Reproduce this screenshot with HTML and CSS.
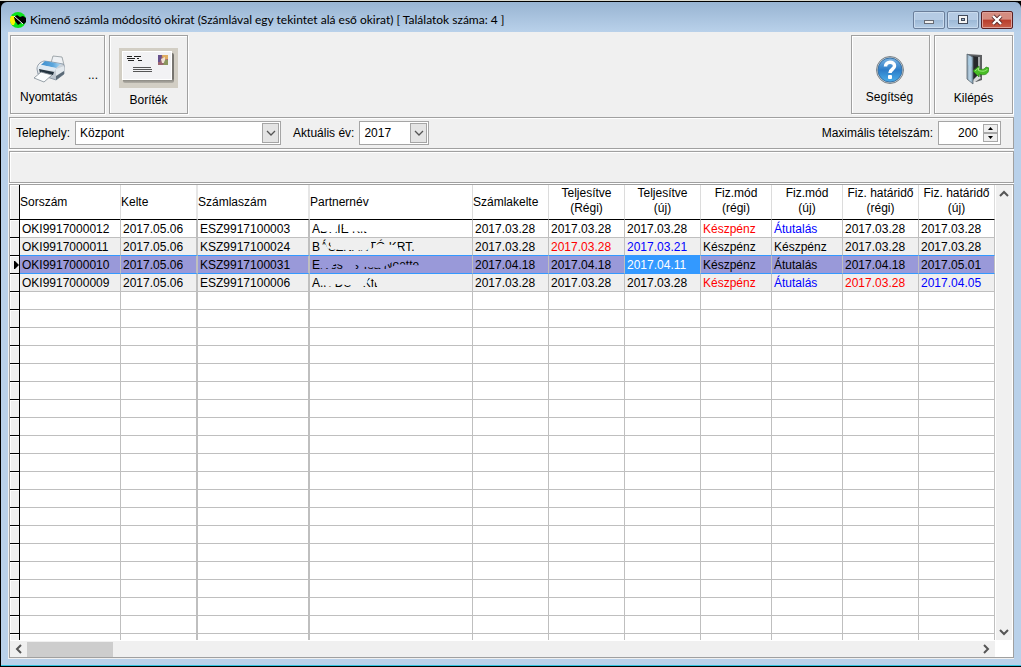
FILE: index.html
```html
<!DOCTYPE html>
<html lang="hu">
<head>
<meta charset="utf-8">
<title>Kimenő számla módosító okirat</title>
<link rel="stylesheet" href="styles.css">
</head>
<body>
<div class="window">
  <header class="titlebar">
    <svg class="app-icon" width="16" height="16" viewBox="0 0 16 16">
      <circle cx="8" cy="8" r="8" fill="#0be31b"/>
      <path d="M1 4L4 4L6 8L4 13L2 13A8 8 0 0 1 1 4Z" fill="#f8f800"/>
      <path d="M4 5L7 3L10 5L13 4L16 6V10L14 12L11 11L8 13L5 9Z" fill="#000"/>
      <path d="M4 4L13 12" stroke="#fff" stroke-width="1"/>
    </svg>
    <h1 class="title">Kimenő számla módosító okirat (Számlával egy tekintet alá eső okirat) [ Találatok száma: 4 ]</h1>
    <div class="window-buttons">
      <button class="wbtn" aria-label="Kis méret"><svg width="12" height="12" viewBox="0 0 12 12"><rect x="1.5" y="6.5" width="9" height="3" fill="#eee" stroke="#666b75"/></svg></button>
      <button class="wbtn" aria-label="Teljes méret"><svg width="12" height="12" viewBox="0 0 12 12"><rect x="1.5" y="1.5" width="9" height="8" fill="#f4f4f4" stroke="#414a5a"/><rect x="4.5" y="4.5" width="3" height="2" fill="#9db4d0" stroke="#414a5a"/></svg></button>
      <button class="wbtn close" aria-label="Bezárás"><svg width="12" height="12" viewBox="0 0 12 12"><path d="M2 2L10 10M10 2L2 10" stroke="#5a2a2a" stroke-width="4"/><path d="M2 2L10 10M10 2L2 10" stroke="#fff" stroke-width="2.4"/></svg></button>
    </div>
  </header>
  <main class="content">
    <nav class="toolbar">
      <button class="tool print">
        <span class="print-row">
        <svg width="32" height="28" viewBox="0 0 32 28">
          <defs>
            <linearGradient id="lid" x1="0" y1="0" x2="1" y2="0"><stop offset="0" stop-color="#3f8fce"/><stop offset=".6" stop-color="#5ba6dc"/><stop offset="1" stop-color="#b5dcf4"/></linearGradient>
            <linearGradient id="side" x1="0" y1="0" x2="1" y2="1"><stop offset="0" stop-color="#fff"/><stop offset="1" stop-color="#a3afbb"/></linearGradient>
          </defs>
          <path d="M18 8L20 1L29 2L31 10L26 13Z" fill="#eef1f4" stroke="#8d959b" stroke-width=".8"/>
          <path d="M4 14C4 10 7 7 11 6L19 7L30 9Q32 10 31 13V19L23 25L5 19Z" fill="url(#side)" stroke="#7c8c9a" stroke-width=".8"/>
          <path d="M8 10L12 6L28 9L23 13Z" fill="url(#lid)"/>
          <path d="M5 12L9 10L23 13L22 16L5 14Z" fill="#dfeaf3"/>
          <path d="M6 14L21 17L20 20L7 18Z" fill="#24333f"/>
          <path d="M23 14L31 11V18L23 24Z" fill="#e3e9ee"/>
          <path d="M23 21L31 16V19L23 25Z" fill="#5b6a77"/>
          <path d="M8 17L19 20L11 27L1 23Z" fill="#fafcfd" stroke="#7f8a93" stroke-width=".8"/>
        </svg><span class="more">...</span></span>
        <span class="print-label">Nyomtatás</span>
      </button>
      <button class="tool cover">
        <svg width="59" height="40" viewBox="0 0 59 40">
          <defs><linearGradient id="shade" x1="0" y1="0" x2="0" y2="1"><stop offset=".85" stop-color="#777570"/><stop offset="1" stop-color="#b3b0a8"/></linearGradient></defs>
          <rect width="59" height="40" fill="#d2cec4"/>
          <rect x="4" y="5" width="51" height="30" rx="2" fill="url(#shade)"/>
          <rect x="3.5" y="3.5" width="49" height="28" fill="#f2f2f4" stroke="#fff"/>
          <path d="M8 8.5H13M15 8.5H22M8 10.5H16M18 10.5H20M9 12.5H15M19 12.5H23" stroke="#222"/>
          <path d="M14 19.5H32M14 21.5H33M14 23.5H33" stroke="#555"/>
          <rect x="39" y="7" width="10" height="10" fill="#9b6570"/><path d="M39 7H43L41 14H39Z" fill="#66508d"/><path d="M43 7H49V11L44 12Z" fill="#e0ad62"/><path d="M42 11L46 9L46 15H43Z" fill="#f0e2d5"/><path d="M46 12H49V17H44Z" fill="#8a965e"/>
        </svg>
        <span>Boríték</span>
      </button>
      <span class="spacer"></span>
      <button class="tool help">
        <svg width="30" height="30" viewBox="0 0 30 30">
          <defs><linearGradient id="ball" x1="0" y1="0" x2="0" y2="1"><stop offset="0" stop-color="#7db4e2"/><stop offset=".5" stop-color="#2c7cc8"/><stop offset="1" stop-color="#4aaeea"/></linearGradient></defs>
          <circle cx="15" cy="15" r="13.5" fill="#c5cace" stroke="#7d858b"/>
          <circle cx="15" cy="15" r="12" fill="url(#ball)" stroke="#3a74a8"/>
          <path d="M10.5 11.5C10.5 6 19.5 6 19.5 11C19.5 14.5 15 14 15 18" fill="none" stroke="#fff" stroke-width="3.5"/>
          <rect x="13" y="20" width="4" height="4" rx="1" fill="#fff"/>
        </svg>
        <span>Segítség</span>
      </button>
      <button class="tool exit">
        <svg width="30" height="32" viewBox="0 0 30 32">
          <defs><linearGradient id="door" x1="0" y1="0" x2="1" y2="0"><stop offset="0" stop-color="#8aa0b2"/><stop offset=".5" stop-color="#bcd6e8"/><stop offset="1" stop-color="#7995aa"/></linearGradient></defs>
          <path d="M8 1L23 2V27L17 29L14 27Z" fill="#5d5f61"/>
          <path d="M12 3L21 4V23L14 27Z" fill="#26292b"/>
          <path d="M19 4L21 4V25L19 24Z" fill="#a8acae"/>
          <path d="M14 27L19 22L22 25L16 29Z" fill="#d8dadb"/>
          <path d="M8 1L14 4V31L8 26Z" fill="url(#door)" stroke="#59646d" stroke-width=".8"/>
          <path d="M9.5 5L12.5 7V14L9.5 12Z" fill="#a9cde4"/>
          <path d="M14 18L20 13V16C24 17 26 16 27 14L30 15C30 21 26 23 20 21V24Z" fill="#48bd25" stroke="#2d8617" stroke-width=".7"/>
          <path d="M16 18L19.5 15V17.5C24 19 27 18 28.5 16" stroke="#9ae879" fill="none"/>
        </svg>
        <span>Kilépés</span>
      </button>
    </nav>
    <section class="panel filters">
      <label for="site">Telephely:</label>
      <span class="combo combo-site"><select id="site"><option>Központ</option></select><span class="arrow"><svg width="10" height="6" viewBox="0 0 10 6"><path d="M1 1L5 5L9 1" fill="none" stroke="#555" stroke-width="1.3"/></svg></span></span>
      <label class="year-label" for="year">Aktuális év:</label>
      <span class="combo combo-year"><select id="year"><option>2017</option></select><span class="arrow"><svg width="10" height="6" viewBox="0 0 10 6"><path d="M1 1L5 5L9 1" fill="none" stroke="#555" stroke-width="1.3"/></svg></span></span>
      <span class="spacer"></span>
      <label for="max">Maximális tételszám:</label>
      <span class="spin"><input id="max" type="text" value="200"><span class="spin-buttons">
        <button aria-label="Növelés"><svg width="5" height="3" viewBox="0 0 5 3"><path d="M0 3L2.5 0L5 3Z"/></svg></button>
        <button aria-label="Csökkentés"><svg width="5" height="3" viewBox="0 0 5 3"><path d="M0 0L2.5 3L5 0Z"/></svg></button></span></span>
    </section>
    <section class="panel info"></section>
    <section class="grid-panel">
      <div class="table-wrap">
        <table class="grid">
          <colgroup><col class="c-ind"><col class="c-num"><col class="c-date"><col class="c-inv"><col><col class="c-std"><col class="c-std"><col class="c-std"><col class="c-mode"><col class="c-mode"><col class="c-std"><col class="c-std"></colgroup>
          <thead><tr><td class="ind"></td><th>Sorszám</th><th class="wide">Kelte</th><th class="wide">Számlaszám</th><th>Partnernév</th><th>Számlakelte</th><th class="mid">Teljesítve<br>(Régi)</th><th class="mid">Teljesítve<br>(új)</th><th class="mid">Fiz.mód<br>(régi)</th><th class="mid">Fiz.mód<br>(új)</th><th class="mid">Fiz. határidő<br>(régi)</th><th class="mid">Fiz. határidő<br>(új)</th></tr></thead>
          <tbody id="rows">
            <tr><td class="ind"></td><td>OKI9917000012</td><td class="wide">2017.05.06</td><td class="wide">ESZ9917100003</td><td>A<span class="worn worn-a">DRIE Kft</span></td><td>2017.03.28</td><td>2017.03.28</td><td>2017.03.28</td><td class="old">Készpénz</td><td class="new">Átutalás</td><td>2017.03.28</td><td>2017.03.28</td></tr>
            <tr class="alt before"><td class="ind"></td><td>OKI9917000011</td><td class="wide">2017.05.06</td><td class="wide">KSZ9917100024</td><td>B<span class="worn worn-b">ÁSZNANTÓ KRT.</span></td><td>2017.03.28</td><td class="old">2017.03.28</td><td class="new">2017.03.21</td><td>Készpénz</td><td>Készpénz</td><td>2017.03.28</td><td>2017.03.28</td></tr>
            <tr class="selected"><td class="ind"><svg width="5" height="8" viewBox="0 0 5 8"><path d="M0 0H1L5 4L1 8H0Z"/></svg></td><td>OKI9917000010</td><td class="wide">2017.05.06</td><td class="wide">KSZ9917100031</td><td>E<span class="worn worn-c">rvés és Tsa Noette</span></td><td>2017.04.18</td><td>2017.04.18</td><td class="focus">2017.04.11</td><td>Készpénz</td><td>Átutalás</td><td>2017.04.18</td><td>2017.05.01</td></tr>
            <tr class="alt"><td class="ind"></td><td>OKI9917000009</td><td class="wide">2017.05.06</td><td class="wide">ESZ9917100006</td><td>A<span class="worn worn-d">.K DU - Kft</span></td><td>2017.03.28</td><td>2017.03.28</td><td>2017.03.28</td><td class="old">Készpénz</td><td class="new">Átutalás</td><td class="old">2017.03.28</td><td class="new">2017.04.05</td></tr>
          </tbody>
        </table>
      </div>
      <div class="vscroll">
        <svg width="10" height="7" viewBox="0 0 10 7"><path d="M1 6L5 2L9 6" fill="none" stroke="#555" stroke-width="2"/></svg>
        <svg width="10" height="7" viewBox="0 0 10 7"><path d="M1 1L5 5L9 1" fill="none" stroke="#555" stroke-width="2"/></svg>
      </div>
      <div class="hscroll">
        <svg width="7" height="10" viewBox="0 0 7 10"><path d="M6 1L2 5L6 9" fill="none" stroke="#555" stroke-width="2"/></svg>
        <span class="thumb"></span>
        <svg width="7" height="10" viewBox="0 0 7 10"><path d="M1 1L5 5L1 9" fill="none" stroke="#555" stroke-width="2"/></svg>
      </div>
    </section>
  </main>
</div>
<script src="rows.js"></script>
</body>
</html>
```
FILE: rows.js
```js
// Fills the rest of the grid with empty ruled rows.
const body = document.getElementById("rows");
for (let r = 0; r < 60; r++) {
  const row = body.insertRow();
  for (let c = 0; c < 12; c++) {
    const cell = row.insertCell();
    if (c === 0) cell.className = "ind";
    if (c === 2 || c === 3) cell.className = "wide";
  }
}
```
FILE: styles.css
```css
* { box-sizing: border-box; }
body {
  margin: 0;
  height: 100vh;
  padding: 1px 0 1px 1px;
  background: #000;
  border-top: 1px solid #d9d8ce;
  font: 12px/15px "Liberation Sans", Arial, sans-serif;
  color: #000;
}
button, input, select { font: inherit; color: inherit; margin: 0; }
svg { display: block; flex: none; }
.window {
  height: 100%;
  display: flex;
  flex-direction: column;
  padding: 0 7px 6px 7px;
  border-radius: 6px 6px 0 0;
  border-bottom: 1px solid #2fc3e0;
  background: linear-gradient(#98b4d2, #b9d1ea 30px);
}
.titlebar { display: flex; height: 30px; flex: none; padding: 6px 1px 0 2px; align-items: center; gap: 4px; }
.title { flex: 1; margin: 0; font: 12px/16px Lato, "Open Sans", sans-serif; white-space: nowrap; }
.window-buttons { display: flex; gap: 2px; }
.wbtn {
  width: 32px; height: 18px; padding: 0;
  display: grid; place-items: center;
  border: 1px solid #6b7f9b; border-radius: 2px;
  box-shadow: inset 0 0 0 1px #c9dbee;
  background: linear-gradient(#b5cbe4 50%, #9cb8d6 50%, #b4cce5);
}
.wbtn.close { border-color: #5a2022; box-shadow: inset 0 0 0 1px #dfa29a; background: linear-gradient(#d58d80 45%, #b83c2b 50%, #c9604b); }
.content { flex: 1; min-height: 0; display: flex; flex-direction: column; background: #f0f0f0; padding: 0 0 1px 1px; }
.toolbar { display: flex; padding: 3px 1px; gap: 4px; }
.tool {
  height: 79px; width: 79px; padding: 0;
  display: flex; flex-direction: column; align-items: center;
  background: #f0f0f0; border: 1px solid #a0a0a0; box-shadow: inset 1px 1px #fff, 1px 1px #fff;
}
.print { width: 95px; align-items: stretch; padding: 19px 6px 0 9px; }
.print-row { display: flex; justify-content: space-between; align-items: flex-end; padding-left: 13px; }
.print-label { text-align: left; margin-top: 7px; }
.cover { padding-top: 12px; gap: 5px; }
.help { padding: 19px 2px 0 0; gap: 5px; }
.exit { padding-top: 17px; gap: 6px; }
.spacer { flex: 1; }
.panel { border: 1px solid #a0a0a0; box-shadow: inset 1px 1px #fff, 0 1px #fff; height: 32px; flex: none; }
.filters { display: flex; align-items: center; padding: 0 12px 0 6px; }
.combo { display: grid; align-items: center; height: 24px; margin-left: 5px; background: #fff; border: 1px solid #a5a5a5; }
.combo select { grid-area: 1 / 1; appearance: none; width: 100%; height: 22px; border: 0; padding: 0 4px; background: none; outline: 0; }
.combo .arrow { grid-area: 1 / 1; justify-self: end; display: grid; place-items: center; width: 17px; height: 20px; margin-right: 1px; border: 1px solid #a5a5a5; background: #e4e4e4; pointer-events: none; }
.combo-site { width: 206px; }
.combo-year { width: 70px; }
.year-label { margin-left: 12px; }
.spin { display: flex; align-items: center; width: 63px; height: 24px; margin-left: 5px; padding-right: 2px; background: #fff; border: 1px solid #a5a5a5; }
.spin input { flex: 1; width: 0; border: 0; padding: 0 5px; text-align: right; background: none; outline: 0; }
.spin-buttons { display: flex; flex-direction: column; width: 15px; }
.spin-buttons button { height: 9px; padding: 0; display: grid; place-items: center; border: 1px solid #a8a8a8; background: #efefef; }
.info { margin-top: 2px; }
.grid-panel {
  flex: 1; min-height: 0; margin-top: 1px; padding-right: 1px;
  display: grid; grid-template: minmax(0, 1fr) 16px / minmax(0, 1fr) 16px;
  column-gap: 1px; row-gap: 1px;
  border: 1px solid #a0a0a0; background: #fff;
}
.table-wrap { overflow: hidden; }
.grid { table-layout: fixed; width: 100%; border-spacing: 0; border-collapse: separate; }
.c-ind { width: 10px; } .c-num { width: 101px; } .c-date { width: 77px; } .c-inv { width: 112px; } .c-std { width: 76px; } .c-mode { width: 71px; }
.grid th { height: 35px; padding: 0; font-weight: 400; text-align: left; white-space: nowrap; border-right: 1px solid #dcdcdc; border-bottom: 1px solid #000; }
.grid th.mid { text-align: center; padding-bottom: 3px; }
.grid td { height: 18px; padding: 1px 2px 0; line-height: 16px; white-space: nowrap; overflow: hidden; border-right: 1px solid #bfbfbf; border-bottom: 1px solid #bfbfbf; }
.grid td.wide { border-right: 2px solid #bfbfbf; }
.grid th.wide { border-right: 2px solid #e6e6e6; }
.grid td.ind { padding: 0 0 0 4px; background: #f0f0f0; border-right: 1px solid #000; border-bottom: 1px solid #000; box-shadow: inset 1px 1px #fff; }
.alt td { background: #efefef; }
.grid .old { color: #f00; }
.grid .new { color: #00f; }
.grid .before td:not(.ind), .grid .selected td:not(.ind) { border-bottom-color: #39f; }
.selected td { background: #9999d9; }
.selected td.focus { background: #39f; color: #fff; }
.worn { display: inline-block; vertical-align: top; height: 16px; }
.worn-a { clip-path: polygon(0 62%, 34% 72%, 40% 20%, 50% 20%, 50% 66%, 100% 66%, 100% 82%, 0 82%); }
.worn-b { clip-path: polygon(0 0, 10% 0, 12% 66%, 50% 72%, 56% 0, 100% 0, 100% 100%, 86% 100%, 82% 40%, 62% 28%, 50% 82%, 10% 82%, 6% 35%, 0 35%); }
.worn-c { clip-path: polygon(0 70%, 12% 70%, 14% 45%, 24% 45%, 24% 82%, 36% 82%, 36% 45%, 40% 45%, 40% 60%, 62% 68%, 76% 20%, 100% 20%, 100% 52%, 78% 46%, 66% 82%, 0 82%); }
.worn-d { clip-path: polygon(0 60%, 20% 74%, 26% 56%, 50% 64%, 80% 68%, 84% 20%, 90% 20%, 100% 60%, 100% 82%, 0 82%); }
.vscroll { display: flex; flex-direction: column; justify-content: space-between; align-items: center; padding: 5px 0 4px; background: #f0f0f0; }
.hscroll { display: flex; align-items: center; padding: 0 5px; background: #f0f0f0; }
.hscroll .thumb { width: 86px; height: 15px; margin: 0 auto 0 5px; background: #cdcdcd; }
```
